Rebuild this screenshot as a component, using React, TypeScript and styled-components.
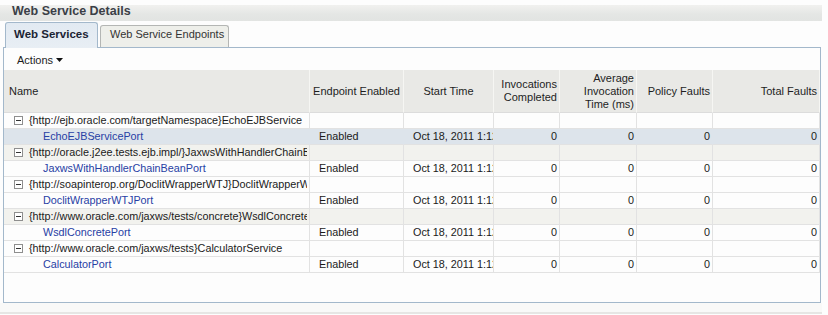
import styled, { createGlobalStyle } from "styled-components";

const GlobalStyle = createGlobalStyle`
  html, body {
    margin: 0;
    padding: 0;
    background: #fdfdfd;
  }
  body {
    font-family: "Liberation Sans", Arial, sans-serif;
    font-size: 11px;
    color: #222;
  }
`;

type Service = {
  name: string;
  port: string;
};

const services: Service[] = [
  {
    name: "{http://ejb.oracle.com/targetNamespace}EchoEJBService",
    port: "EchoEJBServicePort",
  },
  {
    name: "{http://oracle.j2ee.tests.ejb.impl/}JaxwsWithHandlerChainBeanService",
    port: "JaxwsWithHandlerChainBeanPort",
  },
  {
    name: "{http://soapinterop.org/DoclitWrapperWTJ}DoclitWrapperWTJService",
    port: "DoclitWrapperWTJPort",
  },
  {
    name: "{http://www.oracle.com/jaxws/tests/concrete}WsdlConcreteService",
    port: "WsdlConcretePort",
  },
  {
    name: "{http://www.oracle.com/jaxws/tests}CalculatorService",
    port: "CalculatorPort",
  },
];

const columns = [306, 94, 90, 66, 77, 76, 107];

const ExpandIcon = () => (
  <IconBox width="9" height="9" viewBox="0 0 9 9">
    <rect x="0.5" y="0.5" width="8" height="8" fill="#fff" stroke="#8e8e8e" />
    <rect x="2" y="4" width="5" height="1" fill="#333" />
  </IconBox>
);

const DropArrow = () => (
  <svg width="7" height="4" viewBox="0 0 7 4">
    <path d="M0 0 H7 L3.5 4 Z" fill="#111" />
  </svg>
);

export default function App() {
  return (
    <>
      <GlobalStyle />
      <Page>
        <TitleBar>Web Service Details</TitleBar>
        <TabRow>
          <Tab $active>Web Services</Tab>
          <Tab>Web Service Endpoints</Tab>
        </TabRow>
        <Panel>
          <Toolbar>
            <ActionsMenu>
              Actions
              <DropArrow />
            </ActionsMenu>
          </Toolbar>
          <TableArea>
            <Grid>
              <colgroup>
                {columns.map((w, i) => (
                  <col key={i} style={{ width: w }} />
                ))}
              </colgroup>
              <thead>
                <HeadRow>
                  <HeadCell $align="left">Name</HeadCell>
                  <HeadCell $align="center">Endpoint Enabled</HeadCell>
                  <HeadCell $align="center">Start Time</HeadCell>
                  <HeadCell $align="right">
                    Invocations
                    <br />
                    Completed
                  </HeadCell>
                  <HeadCell $align="right">
                    Average
                    <br />
                    Invocation
                    <br />
                    Time (ms)
                  </HeadCell>
                  <HeadCell $align="right">Policy Faults</HeadCell>
                  <HeadCell $align="right">Total Faults</HeadCell>
                </HeadRow>
              </thead>
              <tbody>
                {services.map((s, i) => (
                  <ServiceRows key={s.port} service={s} index={i} />
                ))}
              </tbody>
            </Grid>
          </TableArea>
        </Panel>
        <Footer />
      </Page>
    </>
  );
}

const ServiceRows = ({ service, index }: { service: Service; index: number }) => {
  const banded = index % 2 === 1;
  const selected = index === 0;
  return (
    <>
      <Row $bg={banded ? "#f2f2ee" : "#fdfdfd"}>
        <Cell>
          <ServiceName>
            <ExpandIcon />
            {service.name}
          </ServiceName>
        </Cell>
        <Cell />
        <Cell />
        <Cell />
        <Cell />
        <Cell />
        <Cell />
      </Row>
      <Row $bg={selected ? "#dde4eb" : "#fdfdfd"} $selected={selected}>
        <Cell>
          <PortLink>{service.port}</PortLink>
        </Cell>
        <Cell $pad={9}>Enabled</Cell>
        <Cell $pad={9}>Oct 18, 2011 1:12:45 PM</Cell>
        <Cell $align="right">0</Cell>
        <Cell $align="right">0</Cell>
        <Cell $align="right">0</Cell>
        <Cell $align="right">0</Cell>
      </Row>
    </>
  );
};

const Page = styled.div`
  width: 822px;
  height: 315px;
  display: flex;
  flex-direction: column;
`;

const TitleBar = styled.div`
  margin-top: 5px;
  height: 16px;
  padding-left: 12px;
  background: linear-gradient(#f1f1ef, #e4e6e4 60%, #e2e4e2);
  font-size: 12.5px;
  font-weight: bold;
  line-height: 13px;
  color: #3b3f47;
`;

const TabRow = styled.div`
  height: 26px;
  margin: 0 1px 0 3px;
  padding-left: 2px;
  display: flex;
  align-items: flex-end;
  gap: 2px;
  border-bottom: 1px solid #a3b8cb;
`;

const Tab = styled.div<{ $active?: boolean }>`
  box-sizing: border-box;
  height: ${(p) => (p.$active ? "26px" : "22px")};
  margin-bottom: ${(p) => (p.$active ? "-1px" : "0")};
  padding: ${(p) => (p.$active ? "4px 8px 0 8px" : "1px 9px 0 9px")};
  width: ${(p) => (p.$active ? "93px" : "129px")};
  border: 1px solid ${(p) => (p.$active ? "#a3b8cb" : "#b4b6b4")};
  border-bottom: none;
  border-radius: 3px 3px 0 0;
  background: ${(p) =>
    p.$active ? "linear-gradient(#e2eaf2, #e8eef4)" : "#eeefea"};
  font-size: ${(p) => (p.$active ? "11.5px" : "11px")};
  font-weight: ${(p) => (p.$active ? "bold" : "normal")};
  line-height: 14px;
  color: ${(p) => (p.$active ? "#1b2433" : "#333")};
  white-space: nowrap;
`;

const Panel = styled.div`
  margin: 0 1px 0 3px;
  border: 1px solid #a3b8cb;
  border-top: none;
  background: #fdfdfd;
  display: flex;
  flex-direction: column;
`;

const Toolbar = styled.div`
  height: 22px;
  padding-left: 13px;
  display: flex;
  align-items: center;
`;

const ActionsMenu = styled.div`
  display: flex;
  align-items: center;
  gap: 3px;
  font-size: 11px;
  color: #1c1c1c;
  padding-top: 1px;
`;

const TableArea = styled.div`
  height: 232px;
  flex-shrink: 0;
  background: #fdfdfd;
`;

const Grid = styled.table`
  table-layout: fixed;
  width: 816px;
  border-collapse: separate;
  border-spacing: 0;
  font-family: "Liberation Sans", Arial, sans-serif;
  font-size: 10.8px;
`;

const HeadRow = styled.tr`
  height: 43px;
  background: #e9e9e6;
`;

const HeadCell = styled.th<{ $align: "left" | "center" | "right" }>`
  box-sizing: border-box;
  padding: 0 2px 0 ${(p) => (p.$align === "left" ? "5px" : "2px")};
  text-align: ${(p) => p.$align};
  vertical-align: middle;
  font-weight: normal;
  font-size: 11px;
  line-height: 13px;
  color: #1e1e1e;
  border-right: 1px solid #f6f6f3;
  border-bottom: 1px solid #dcdcdc;
  white-space: nowrap;
`;

const Row = styled.tr<{ $bg: string; $selected?: boolean }>`
  height: 16px;
  background: ${(p) => p.$bg};

  td {
    border-right-color: ${(p) => (p.$selected ? p.$bg : "#e2e2e2")};
  }
`;

const Cell = styled.td<{ $align?: "left" | "right"; $pad?: number }>`
  box-sizing: border-box;
  padding: 0 2px 0 ${(p) => (p.$pad ? `${p.$pad}px` : "2px")};
  text-align: ${(p) => p.$align ?? "left"};
  vertical-align: middle;
  line-height: 15px;
  color: #1a1a1a;
  border-right: 1px solid #e2e2e2;
  border-bottom: 1px solid #e2e2e2;
  white-space: nowrap;
  overflow: hidden;
  text-overflow: clip;
`;

const ServiceName = styled.div`
  display: flex;
  align-items: center;
  gap: 6px;
  padding-left: 8px;
  color: #1a1a1a;
  overflow: hidden;
  white-space: nowrap;
`;

const IconBox = styled.svg`
  flex-shrink: 0;
`;

const PortLink = styled.span`
  padding-left: 37px;
  color: #2740a4;
`;

const Footer = styled.div`
  height: 9px;
  flex-shrink: 0;
  border-bottom: 2px solid #e6e6e4;
  background: #f9f9f8;
`;
